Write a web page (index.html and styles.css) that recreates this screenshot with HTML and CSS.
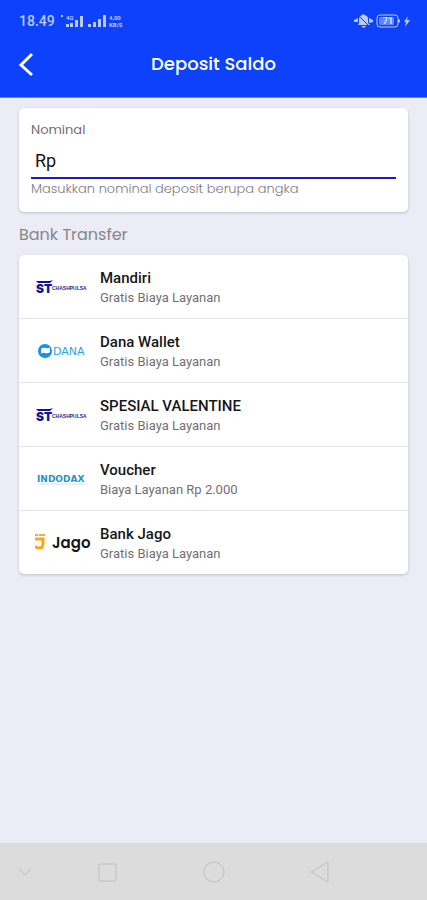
FILE: index.html
```html
<!DOCTYPE html>
<html lang="id">
<head>
<meta charset="utf-8">
<meta name="viewport" content="width=device-width, initial-scale=1">
<title>Deposit Saldo</title>
<link rel="stylesheet" href="styles.css">
</head>
<body>
<header class="header">
  <div class="status">
    <div class="status-group">
      <span class="time">18.49</span>
      <svg width="68" height="14" viewBox="0 0 68 14" fill="currentColor" aria-hidden="true">
        <path d="M1 1h2v2H1zM6 10h3v3H6zM10 9h3v4h-3zM15 6h3v7h-3zM20 2h3v11h-3zM28 10h3v3h-3zM33 8h3v5h-3zM38 5h3v8h-3zM43 1h3v12h-3z"/>
        <text x="6" y="6" class="tiny">4G</text>
        <text x="49" y="6" class="tiny">4,00</text>
        <text x="49" y="13" class="tiny">KB/S</text>
      </svg>
    </div>
    <div class="status-group">
      <svg width="19" height="16" viewBox="0 0 19 16" fill="currentColor" aria-hidden="true">
        <path d="M5 10V6q0-3 3-4l1-1 2 1q3 1 3 4v4l2 2H4zM7 13h5l-2 2zM0 7l4-2v4L0 9zM15 5l4 2v2l-4 1z"/>
        <path class="slash" d="M4 2l12 12"/>
      </svg>
      <svg width="24" height="14" viewBox="0 0 24 14" aria-hidden="true">
        <rect x="1" y="1" width="21" height="12" rx="3" fill="none" stroke="currentColor"/>
        <rect x="3" y="3" width="15" height="8" rx="1" fill="currentColor" opacity=".5"/>
        <path d="M22 5l2 1v2l-2 1z" fill="currentColor"/>
        <text x="12" y="10" class="charge" text-anchor="middle">71</text>
      </svg>
      <svg width="8" height="12" viewBox="0 0 8 12" fill="currentColor" aria-hidden="true"><path d="M5 1L1 7h2l-1 5 5-7H4z"/></svg>
    </div>
  </div>
  <div class="bar">
    <button class="back" type="button" aria-label="Kembali">
      <svg width="16" height="26" viewBox="0 0 16 26" fill="none" stroke="currentColor" stroke-width="3" aria-hidden="true"><path d="M14 3L3 14l11 10"/></svg>
    </button>
    <h1 class="title">Deposit Saldo</h1>
  </div>
</header>

<main class="content">
  <section class="card amount">
    <label class="label" for="nominal">Nominal</label>
    <input class="field" id="nominal" type="text" inputmode="numeric" value="Rp" aria-describedby="hint">
    <p class="hint" id="hint">Masukkan nominal deposit berupa angka</p>
  </section>

  <h2 class="section">Bank Transfer</h2>
  <ul class="card methods">
    <li class="item"><button class="method" type="button">
      <svg class="logo" viewBox="0 0 56 26" aria-hidden="true">
        <path class="navy" d="M1 6h14l3-1-3 3H3z"/>
        <text x="1" y="18" class="mark">ST</text>
        <text x="17" y="15" class="pulsa">CHASHPULSA</text>
      </svg>
      <span class="text"><span class="name">Mandiri</span><span class="fee">Gratis Biaya Layanan</span></span>
    </button></li>
    <li class="item"><button class="method" type="button">
      <svg class="logo" viewBox="0 0 56 26" aria-hidden="true">
        <circle cx="10" cy="12" r="7" fill="#1592e6"/>
        <path d="M6 10q2-2 5-1t4-1v5q-2 2-5 1t-4 1z" fill="#fff"/>
        <text x="18" y="16" class="dana">DANA</text>
      </svg>
      <span class="text"><span class="name">Dana Wallet</span><span class="fee">Gratis Biaya Layanan</span></span>
    </button></li>
    <li class="item"><button class="method" type="button">
      <svg class="logo" viewBox="0 0 56 26" aria-hidden="true">
        <path class="navy" d="M1 6h14l3-1-3 3H3z"/>
        <text x="1" y="18" class="mark">ST</text>
        <text x="17" y="15" class="pulsa">CHASHPULSA</text>
      </svg>
      <span class="text"><span class="name">SPESIAL VALENTINE</span><span class="fee">Gratis Biaya Layanan</span></span>
    </button></li>
    <li class="item"><button class="method" type="button">
      <svg class="logo" viewBox="0 0 56 26" aria-hidden="true">
        <text x="2" y="15" class="indodax">INDODAX</text>
        <path d="M3 17h48" stroke="#c3e3f4" stroke-width="1"/>
      </svg>
      <span class="text"><span class="name">Voucher</span><span class="fee">Biaya Layanan Rp 2.000</span></span>
    </button></li>
    <li class="item"><button class="method" type="button">
      <svg class="logo" viewBox="0 0 56 26" aria-hidden="true">
        <path d="M0 4h3M4 4h6" stroke="#f8ae2a" stroke-width="2"/>
        <path d="M0 8h8v5q0 4-4 4-3 0-4-2" fill="none" stroke="#faa51a" stroke-width="3"/>
        <text x="17" y="17" class="jago">Jago</text>
      </svg>
      <span class="text"><span class="name">Bank Jago</span><span class="fee">Gratis Biaya Layanan</span></span>
    </button></li>
  </ul>
</main>

<nav class="nav" aria-label="Sistem">
  <button class="key" type="button" aria-label="Sembunyikan"><svg width="20" height="20" viewBox="0 0 20 20"><path d="M2 7l6 6 6-6"/></svg></button>
  <button class="key" type="button" aria-label="Terkini"><svg width="20" height="20" viewBox="0 0 20 20"><rect x="2" y="2" width="17" height="17" rx="1"/></svg></button>
  <button class="key" type="button" aria-label="Beranda"><svg width="24" height="24" viewBox="0 0 24 24"><circle cx="12" cy="12" r="10"/></svg></button>
  <button class="key" type="button" aria-label="Kembali"><svg width="22" height="22" viewBox="0 0 22 22"><path d="M19 1v20L2 11z"/></svg></button>
</nav>
</body>
</html>
```
FILE: styles.css
```css
* { box-sizing: border-box; }

body {
  margin: 0;
  min-height: 100vh;
  display: flex;
  flex-direction: column;
  background: #ebecf6;
  font-family: Roboto, sans-serif;
  color: #17171a;
}

button {
  border: 0;
  padding: 0;
  background: none;
  font: inherit;
  color: inherit;
}

svg { display: block; }

.header {
  background: #0d41fb;
  color: #fff;
  padding: 12px 16px;
  border-bottom: 1px solid #6985f6;
}

.status {
  display: flex;
  justify-content: space-between;
  align-items: center;
  height: 18px;
  padding-left: 3px;
  color: #b9cafd;
}

.status-group {
  display: flex;
  align-items: center;
  gap: 3px;
}

.time {
  font-size: 14px;
  font-weight: 500;
  margin-right: 2px;
}

.tiny {
  font-size: 6px;
  font-weight: 700;
}

.charge {
  font-size: 9px;
  font-weight: 700;
  fill: #dce5ff;
}

.slash {
  stroke: #0d41fb;
  stroke-width: 1;
}

.bar {
  display: grid;
  grid-template-columns: 32px 1fr 32px;
  align-items: center;
  height: 32px;
  margin: 18px 0 5px;
}

.back { padding-left: 2px; }

.title {
  margin: 0;
  font-family: Poppins, Inter, sans-serif;
  font-size: 18px;
  font-weight: 500;
  line-height: 24px;
  text-align: center;
}

.content {
  flex: 1;
  padding: 10px 19px 24px;
}

.card {
  background: #fff;
  border-radius: 5px;
  box-shadow: 0 1px 3px #0003;
}

.amount {
  display: flex;
  flex-direction: column;
  padding: 12px 12px 13px;
}

.label,
.hint {
  font-family: Poppins, Inter, sans-serif;
  font-size: 13px;
  line-height: 20px;
  color: #6f6f73;
}

.hint {
  margin: 0;
  color: #7b7b7f;
  font-weight: 300;
}

.field {
  width: 100%;
  height: 39px;
  padding: 4px 4px 0;
  border: 0;
  border-bottom: 2px solid #1c18c4;
  border-radius: 0;
  outline: 0;
  font: 400 18px/20px Roboto, sans-serif;
  color: #17171a;
}

.section {
  margin: 11px 0 8px;
  font-family: Poppins, Inter, sans-serif;
  font-size: 16px;
  font-weight: 400;
  line-height: 24px;
  color: #85868d;
}

.methods {
  list-style: none;
  margin: 0;
  padding: 0;
}

.item + .item { border-top: 1px solid #e6e6e8; }

.method {
  display: flex;
  align-items: center;
  gap: 9px;
  width: 100%;
  height: 63px;
  padding: 2px 16px 0;
  text-align: left;
}

.logo {
  flex: none;
  width: 56px;
  height: 26px;
}

.text {
  display: flex;
  flex-direction: column;
}

.name {
  font-size: 15px;
  font-weight: 500;
  line-height: 20px;
}

.fee {
  font-size: 13px;
  line-height: 20px;
  color: #707074;
}

.navy { fill: #11148e; }

.mark {
  font: 900 12px Inter, sans-serif;
  fill: #11148e;
}

.pulsa {
  font: 700 5px "Liberation Sans", sans-serif;
  fill: #25288f;
}

.dana {
  font: 400 11px "DejaVu Sans", sans-serif;
  fill: #2ba3e8;
}

.indodax {
  font: 700 9px "DejaVu Sans", sans-serif;
  fill: #2b91c6;
}

.jago {
  font: 600 15px Poppins, Inter, sans-serif;
  fill: #17171a;
}

.nav {
  display: grid;
  grid-template-columns: 1fr 2fr 2fr 2fr 1fr;
  height: 57px;
  background: #dcdcdc;
}

.key {
  display: flex;
  align-items: center;
  justify-content: center;
}

.key svg {
  fill: none;
  stroke: #bebebe;
  stroke-width: 1;
}
```
